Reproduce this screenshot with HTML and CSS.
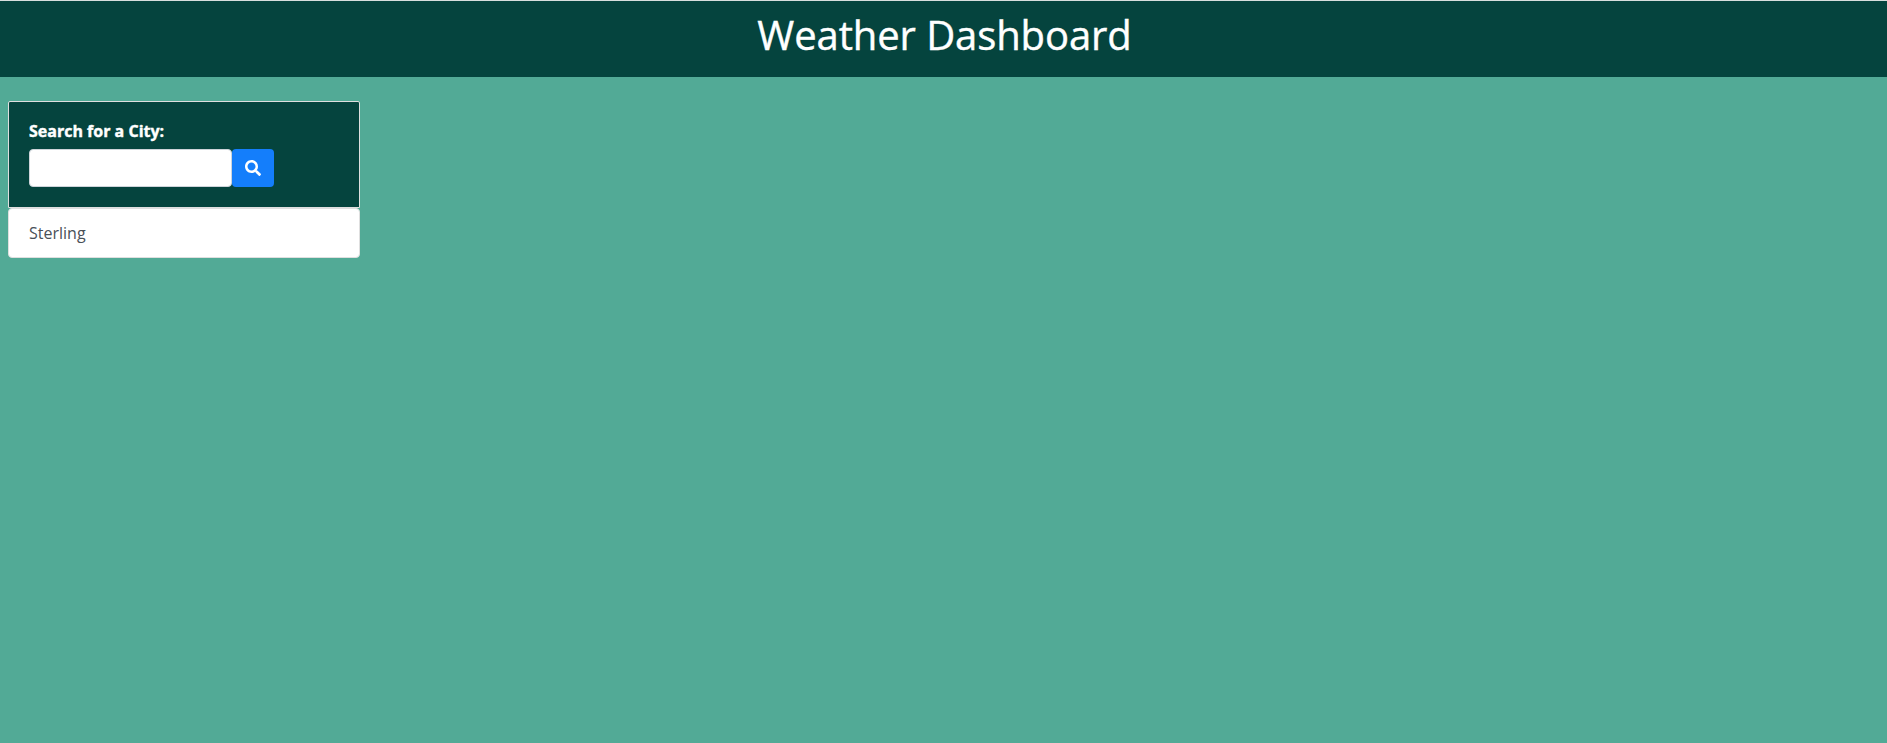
FILE: index.html
```html
<!DOCTYPE html>
<html lang="en">
<head>
<meta charset="utf-8">
<title>Weather Dashboard</title>
<link rel="stylesheet" href="styles.css">
</head>
<body>
<header class="page-header"><h1>Weather Dashboard</h1></header>
<main class="sidebar">
  <section class="search-card">
    <label class="search-label" for="city">Search for a City:</label>
    <form class="search-form">
      <input class="search-input" id="city" type="text">
      <button class="search-button" type="button" aria-label="Search">
        <svg width="16" height="16" viewBox="0 0 512 512" fill="currentColor"><path d="M505 442.700L405.300 343c-4.500-4.500-10.600-7-17-7H372c27.600-35.300 44-79.700 44-128C416 93.100 322.900 0 208 0S0 93.100 0 208s93.100 208 208 208c48.300 0 92.700-16.400 128-44v16.300c0 6.400 2.500 12.500 7 17l99.700 99.700c9.400 9.400 24.600 9.400 33.900 0l28.300-28.300c9.400-9.400 9.400-24.600.1-34zM208 336c-70.700 0-128-57.200-128-128 0-70.700 57.200-128 128-128 70.700 0 128 57.200 128 128 0 70.700-57.200 128-128 128z"/></svg>
      </button>
    </form>
  </section>
  <ul class="history"><li class="history-item">Sterling</li></ul>
</main>
</body>
</html>
```
FILE: styles.css
```css
* { box-sizing: border-box; }
body {
  margin: 0;
  min-height: 100vh;
  background: #52aa96;
  color: #fff;
  font: 16px/24px "Open Sans", "Noto Sans", sans-serif;
}
.page-header {
  height: 77px;
  padding: 10px 0 0 2px;
  border-top: 1px solid #d9dfde;
  background: #05443e;
  text-align: center;
}
h1 {
  margin: 0;
  font-size: 40px;
  font-weight: 400;
  line-height: 48px;
  letter-spacing: -0.1px;
  -webkit-text-stroke: 0.4px #fff;
}
.sidebar { width: 352px; margin: 24px 0 0 8px; }
.search-card {
  height: 107px;
  padding: 17px 20px 20px;
  border: 1px solid #dfdfdf;
  border-radius: 2px 2px 0 0;
  background: #05443e;
}
.search-label {
  display: block;
  margin-bottom: 6px;
  font-weight: 700;
  -webkit-text-stroke: 0.4px #fff;
}
.search-form { display: flex; }
.search-input {
  width: 203px;
  height: 38px;
  padding: 6px 12px;
  border: 1px solid #ced4da;
  border-radius: 4px;
  background: #fff;
  font: inherit;
}
.search-button {
  display: flex;
  align-items: center;
  justify-content: center;
  width: 42px;
  height: 38px;
  padding: 0;
  border: 0;
  border-radius: 4px;
  background: #147efb;
  color: #fff;
}
.history { margin: 0; padding: 0; list-style: none; }
.history-item {
  height: 50px;
  padding: 12px 20px;
  border: 1px solid #dfdfdf;
  border-radius: 4px;
  background: #fff;
  color: #495057;
}
```
